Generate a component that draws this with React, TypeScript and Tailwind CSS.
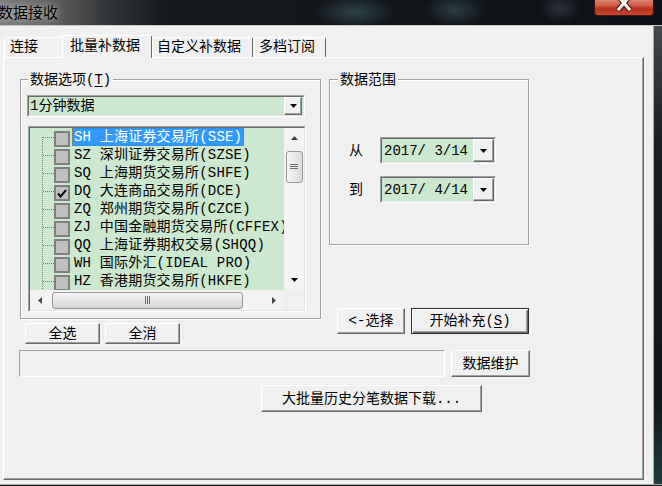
import React from "react";

const FONT = "font-[family-name:'Liberation_Mono','Noto_Sans_CJK_SC',monospace]";
const raised =
  "bg-[#f0f0f0] border border-t-white border-l-white border-r-[#696969] border-b-[#696969] shadow-[inset_-1px_-1px_0_#a0a0a0]";
const defBtn =
  "bg-[#f0f0f0] border border-[#2e2e2e] shadow-[inset_1px_1px_0_#fff,inset_-1px_-1px_0_#696969,inset_-2px_-2px_0_#a0a0a0]";
const etched = "border border-[#a0a0a0] shadow-[1px_1px_0_#fff,inset_1px_1px_0_#fff]";

function Sunken({ className, innerClassName, children }: { className: string; innerClassName?: string; children?: React.ReactNode }) {
  return (
    <div className={`border border-t-[#a0a0a0] border-l-[#a0a0a0] border-r-white border-b-white ${className}`}>
      <div className={`w-full h-full border border-t-[#696969] border-l-[#696969] border-r-[#e3e3e3] border-b-[#e3e3e3] ${innerClassName ?? ""}`}>
        {children}
      </div>
    </div>
  );
}

function Tri({ dir }: { dir: "up" | "down" | "left" | "right" }) {
  if (dir === "down")
    return (
      <svg width="7" height="4" viewBox="0 0 7 4"><polygon points="0,0 7,0 3.5,4" fill="#000" /></svg>
    );
  if (dir === "up")
    return (
      <svg width="7" height="4" viewBox="0 0 7 4"><polygon points="0,4 7,4 3.5,0" fill="#444" /></svg>
    );
  if (dir === "left")
    return (
      <svg width="4" height="7" viewBox="0 0 4 7"><polygon points="4,0 4,7 0,3.5" fill="#444" /></svg>
    );
  return (
    <svg width="4" height="7" viewBox="0 0 4 7"><polygon points="0,0 0,7 4,3.5" fill="#444" /></svg>
  );
}

function DropBtn({ w, h }: { w: string; h: string }) {
  return (
    <div className={`${raised} ${w} ${h} shrink-0 flex items-center justify-center`}>
      <Tri dir="down" />
    </div>
  );
}

function Btn({ children, className, def }: { children: React.ReactNode; className: string; def?: boolean }) {
  return (
    <div className={`${def ? defBtn : raised} ${className} shrink-0 flex items-center justify-center leading-[18px]`}>
      {children}
    </div>
  );
}

const rows: [string, string][] = [
  ["SH", "上海证券交易所(SSE)"],
  ["SZ", "深圳证券交易所(SZSE)"],
  ["SQ", "上海期货交易所(SHFE)"],
  ["DQ", "大连商品交易所(DCE)"],
  ["ZQ", "郑州期货交易所(CZCE)"],
  ["ZJ", "中国金融期货交易所(CFFEX)"],
  ["QQ", "上海证券期权交易(SHQQ)"],
  ["WH", "国际外汇(IDEAL PRO)"],
  ["HZ", "香港期货交易所(HKFE)"],
];

function TreeRow({ code, name, i }: { code: string; name: string; i: number }) {
  const selected = i === 0;
  const checked = code === "DQ";
  return (
    <div className="flex items-start h-[18px] shrink-0">
      <svg width="12" height="18" viewBox="0 0 12 18" className="ml-[12px] shrink-0">
        <line x1="0.5" y1={i === 0 ? 9 : 0} x2="0.5" y2="18" stroke="#7a7a7a" strokeDasharray="1 1" />
        <line x1="1" y1="9.5" x2="12" y2="9.5" stroke="#7a7a7a" strokeDasharray="1 1" />
      </svg>
      <div className="mt-[3px] w-[16px] h-[16px] shrink-0 border-2 border-[#7f7f7f] bg-[#c0c0c0] flex items-center justify-center">
        {checked && (
          <svg width="10" height="9" viewBox="0 0 10 9">
            <path d="M1 4.5 L3.6 7.4 L9 1.2" stroke="#000" strokeWidth="2" fill="none" />
          </svg>
        )}
      </div>
      <span
        className={`ml-[2px] px-[1px] border leading-[16px] whitespace-pre tracking-[0.2px] ${
          selected ? "bg-[#3399ff] text-white border-dotted border-[#b06a20]" : "border-transparent"
        }`}
      >
        {code} {name}
      </span>
    </div>
  );
}

export default function App() {
  return (
    <div className={`w-[662px] h-[486px] overflow-hidden flex flex-col bg-[#12181b] text-[14px] leading-[18px] text-black ${FONT}`}>
      {/* Title bar */}
      <div className="h-[25px] shrink-0 flex items-start justify-between bg-[radial-gradient(ellipse_40px_16px_at_355px_12px,rgba(80,125,135,0.45),transparent),radial-gradient(ellipse_30px_16px_at_455px_10px,rgba(80,125,135,0.4),transparent),radial-gradient(ellipse_20px_14px_at_560px_8px,rgba(70,80,90,0.5),transparent),linear-gradient(90deg,#7a7a7a_0px,#5e5e5e_55px,#34373a_105px,#15191d_165px,#0d1117_100%)]">
        <span className="ml-[-2px] mt-[3px] text-[15px] leading-[18px] font-[family-name:'Noto_Sans_CJK_SC',sans-serif] text-black [text-shadow:0_0_6px_rgba(255,255,255,0.55),0_0_12px_rgba(220,220,220,0.5)]">
          数据接收
        </span>
        <div className="mr-[8px] w-[60px] h-[16px] rounded-b-[4px] border border-t-0 border-[#4a1208] bg-[linear-gradient(180deg,#d98472_0%,#cf5842_40%,#b5301c_55%,#c44a33_100%)] flex justify-center overflow-hidden">
          <svg width="16" height="12" viewBox="0 0 16 12">
            <path d="M2 -4 L14 10 M14 -4 L2 10" stroke="#3a1a14" strokeWidth="5" />
            <path d="M2 -4 L14 10 M14 -4 L2 10" stroke="#fff" strokeWidth="3" />
          </svg>
        </div>
      </div>
      <div className="h-px shrink-0 bg-[#c9c9c9]" />

      {/* Main row */}
      <div className="flex h-[458px] shrink-0">
        <div className="w-[653px] bg-[#f0f0f0] flex flex-col pt-[9px]">
          {/* Tabs */}
          <div className="flex items-end h-[22px] ml-[4px]">
            <div className="w-[58px] h-[20px] pl-[5px] border-t border-l border-white rounded-tl-[2px]">连接</div>
            <div className="relative z-10 -mb-px w-[90px] h-[23px] pl-[7px] bg-[#f0f0f0] border-t border-l border-r border-t-white border-l-white border-r-[#696969] rounded-t-[2px] leading-[20px]">
              批量补数据
            </div>
            <div className="w-[101px] h-[20px] pl-[4px] border-t border-l border-r border-t-white border-l-white border-r-[#696969] rounded-t-[2px]">
              自定义补数据
            </div>
            <div className="ml-px w-[72px] h-[20px] pl-[4px] border-t border-l border-r border-t-white border-l-white border-r-[#696969] rounded-t-[2px]">
              多档订阅
            </div>
          </div>

          {/* Panel */}
          <div className="ml-[3px] w-[641px] h-[423px] border border-t-white border-l-white border-r-[#696969] border-b-[#696969] shadow-[inset_-1px_-1px_0_#a0a0a0] flex flex-col">
            <div className="flex items-start mt-[21px] ml-[16px]">
              {/* Left column */}
              <div className="flex flex-col">
                <div className={`relative w-[301px] h-[240px] ${etched} flex flex-col`}>
                  <span className="absolute -top-[9px] left-[7px] px-[2px] bg-[#f0f0f0]">
                    数据选项(<span className="underline underline-offset-2">T</span>)
                  </span>
                  <Sunken className="ml-[6px] mt-[15px] w-[278px] h-[22px]" innerClassName="bg-[#cce8cf] flex items-center pr-px">
                    <span className="flex-1 pl-px">1分钟数据</span>
                    <DropBtn w="w-[18px]" h="h-[18px]" />
                  </Sunken>
                  <Sunken className="ml-[7px] mt-[9px] w-[278px] h-[186px]" innerClassName="flex flex-col">
                    <div className="flex h-[162px]">
                      <div className="w-[254px] h-[162px] overflow-hidden bg-[#cce8cf] flex flex-col">
                        {rows.map((r, i) => (
                          <TreeRow key={r[0]} code={r[0]} name={r[1]} i={i} />
                        ))}
                      </div>
                      <div className="w-[20px] h-[162px] bg-[#f3f3f3] flex flex-col items-center">
                        <div className="h-[20px] w-full flex items-center justify-center">
                          <Tri dir="up" />
                        </div>
                        <div className="mt-[3px] w-[17px] h-[32px] rounded-[3px] border border-[#969696] bg-[linear-gradient(90deg,#f7f7f7,#dadada)] flex items-center justify-center">
                          <svg width="8" height="8" viewBox="0 0 8 8">
                            <path d="M0 1.5 H8 M0 3.5 H8 M0 5.5 H8" stroke="#6a6a6a" />
                          </svg>
                        </div>
                        <div className="flex-1" />
                        <div className="h-[20px] w-full flex items-center justify-center">
                          <Tri dir="down" />
                        </div>
                      </div>
                    </div>
                    <div className="flex h-[20px]">
                      <div className="w-[254px] h-[20px] bg-[#f3f3f3] flex items-center">
                        <div className="w-[20px] h-full flex items-center justify-center">
                          <Tri dir="left" />
                        </div>
                        <div className="ml-[2px] w-[191px] h-[17px] rounded-[3px] border border-[#969696] bg-[linear-gradient(180deg,#f7f7f7,#d6d6d6)] flex items-center justify-center">
                          <svg width="8" height="8" viewBox="0 0 8 8">
                            <path d="M1.5 0 V8 M3.5 0 V8 M5.5 0 V8" stroke="#6a6a6a" />
                          </svg>
                        </div>
                        <div className="flex-1" />
                        <div className="w-[20px] h-full flex items-center justify-center">
                          <Tri dir="right" />
                        </div>
                      </div>
                      <div className="w-[20px] h-[20px] bg-[#f0f0f0]" />
                    </div>
                  </Sunken>
                </div>
                <div className="flex mt-[4px] ml-[5px] gap-[5px]">
                  <Btn className="w-[75px] h-[21px]">全选</Btn>
                  <Btn className="w-[75px] h-[21px]">全消</Btn>
                </div>
              </div>

              {/* Right column */}
              <div className="flex flex-col ml-[8px]">
                <div className={`relative w-[200px] h-[166px] ${etched}`}>
                  <span className="absolute -top-[9px] left-[8px] px-[2px] bg-[#f0f0f0]">数据范围</span>
                  <div className="mt-[57px] ml-[19px] flex flex-col gap-[12px]">
                    {[
                      ["从", "2017/ 3/14"],
                      ["到", "2017/ 4/14"],
                    ].map(([l, d]) => (
                      <div key={l} className="flex items-center">
                        <span className="w-[31px]">{l}</span>
                        <Sunken className="w-[116px] h-[27px]" innerClassName="bg-[#cce8cf] flex items-center justify-between pl-[2px]">
                          <span className="whitespace-pre">{d}</span>
                          <DropBtn w="w-[21px]" h="h-[23px]" />
                        </Sunken>
                      </div>
                    ))}
                  </div>
                </div>
                <div className="flex mt-[63px] ml-[8px] gap-[6px]">
                  <Btn className="w-[68px] h-[26px]">&lt;-选择</Btn>
                  <Btn def className="w-[118px] h-[26px]">
                    开始补充(<span className="underline underline-offset-2">S</span>)
                  </Btn>
                </div>
              </div>
            </div>

            <div className="flex mt-[6px] ml-[15px] gap-[6px]">
              <div className="w-[426px] h-[27px] border border-t-[#a0a0a0] border-l-[#a0a0a0] border-r-white border-b-white" />
              <Btn className="w-[79px] h-[27px]">数据维护</Btn>
            </div>

            <div className="flex mt-[8px] ml-[257px]">
              <Btn className="w-[221px] h-[27px]">大批量历史分笔数据下载...</Btn>
            </div>
          </div>
        </div>
        <div className="w-px bg-[#a9a9a9]" />
        <div className="flex-1 bg-[linear-gradient(180deg,#45484b_0%,#1a1f22_25%,#0f1518_80%,#1f3b3d_100%)]" />
      </div>
      <div className="flex-1 border-t border-[#a9a9a9] bg-[#14191c]" />
    </div>
  );
}
